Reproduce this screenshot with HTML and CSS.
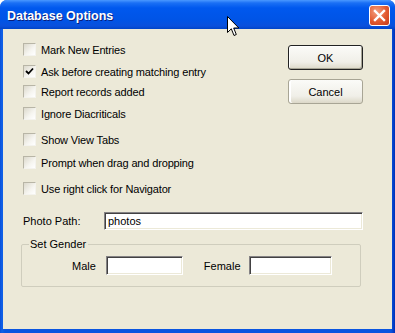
FILE: index.html
```html
<!DOCTYPE html>
<html>
    <head>
        <meta charset="utf-8">
        <link rel="stylesheet" href="styles.css">
    </head>
    <body>
    <div class="win">
        <div class="caption">
            <span class="title">Database Options</span>
            <button class="close" type="button">
                <svg width="13" height="13" viewBox="0 0 13 13"><path d="M2 2 L11 11 M11 2 L2 11" stroke="#fff" stroke-width="2.4" stroke-linecap="square"/></svg>
            </button>
        </div>
        <div class="client">
            <div class="top">
                <div class="opts">
                    <label class="chk"><span class="box"></span>Mark New Entries</label>
                    <label class="chk g9"><span class="box on"><svg width="9" height="9" viewBox="0 0 9 9"><path d="M1 4 L3.5 6.5 L8 1.5" fill="none" stroke="#000" stroke-width="1.8"/></svg></span>Ask before creating matching entry</label>
                    <label class="chk g7"><span class="box"></span>Report records added</label>
                    <label class="chk g9"><span class="box"></span>Ignore Diacriticals</label>
                    <label class="chk g13"><span class="box"></span>Show View Tabs</label>
                    <label class="chk g10"><span class="box"></span>Prompt when drag and dropping</label>
                    <label class="chk g13"><span class="box"></span>Use right click for Navigator</label>
                </div>
                <div class="btns">
                    <button class="btn def" type="button">OK</button>
                    <button class="btn" type="button">Cancel</button>
                </div>
            </div>
            <div class="path">
                <label for="photo">Photo Path:</label>
                <input class="txt wide" id="photo" value="photos">
            </div>
            <fieldset class="grp">
                <legend>Set Gender</legend>
                <div class="gender">
                    <label class="lbl-m" for="male">Male</label>
                    <input class="txt short" id="male">
                    <label class="lbl-f" for="female">Female</label>
                    <input class="txt short2" id="female">
                </div>
            </fieldset>
        </div>
        <!-- mouse pointer sitting over the caption -->
        <svg class="cursor" width="13" height="21" viewBox="0 0 13 21"><path d="M0.5 0.5 L0.5 16.5 L4.3 12.8 L7 19.5 L9.3 18.5 L6.7 12 L11.8 12 Z" fill="#fff" stroke="#000" stroke-width="1"/></svg>
    </div>
    </body>
</html>
```

FILE: styles.css
```css
body{
    margin: 0;
    font-family: 'Liberation Sans', Arial, sans-serif;
    font-size: 11px;
    color: #000;
}
body *{
    box-sizing: border-box;
}
.win{
    position: relative;
    width: 395px;
    height: 333px;
    background: linear-gradient(to right, #0a4fd8, #1061e8 2px, #0a55e0 5px, #0a55e0 calc(100% - 4px), #0030b8);
    border-radius: 7px 7px 0 0;
    display: flex;
    flex-direction: column;
    overflow: hidden;
}
.caption{
    height: 29px;
    flex: none;
    display: flex;
    align-items: center;
    justify-content: space-between;
    padding: 0 5px 0 7px;
    background: linear-gradient(to bottom, #4a98ff 0, #1a6ff5 3px, #0058ee 8px, #0054e6 20px, #0a50dc 26px, #0044c8 29px);
}
.title{
    color: #fff;
    font-weight: bold;
    font-size: 12.5px;
    text-shadow: 1px 1px 0 #0a1e7a;
    margin-top: 2px;
}
.close{
    width: 21px;
    height: 21px;
    margin-top: 1px;
    padding: 0;
    border: 1px solid #fff;
    border-radius: 3px;
    background: radial-gradient(circle at 35% 30%, #f4a080, #e25a30 55%, #c63a18);
    display: flex;
    align-items: center;
    justify-content: center;
}
.client{
    flex: 1;
    margin: 0 3px 4px 3px;
    background: #ece9d8;
}
.top{
    display: flex;
    justify-content: space-between;
}
.opts{
    padding: 14px 0 0 20px;
    display: flex;
    flex-direction: column;
}
.chk{
    display: flex;
    align-items: center;
    height: 13px;
    gap: 5px;
    white-space: nowrap;
    letter-spacing: -0.15px;
}
.g7{ margin-top: 7px; }
.g9{ margin-top: 9px; }
.g10{ margin-top: 10px; }
.g13{ margin-top: 13px; }
.box{
    width: 13px;
    height: 13px;
    flex: none;
    border: 1px solid #b8b5a6;
    border-right-color: #f4f3ee;
    border-bottom-color: #f4f3ee;
    background: linear-gradient(135deg, #dcd9cc, #f6f5f0 60%, #fff);
    display: flex;
    align-items: center;
    justify-content: center;
}
.btns{
    display: flex;
    flex-direction: column;
    gap: 9px;
    margin: 16px 29px 0 0;
}
.btn{
    width: 75px;
    height: 25px;
    font: inherit;
    color: #000;
    border: 1px solid #a8a595;
    border-radius: 3px;
    background: linear-gradient(to bottom, #fbfbf8, #f0efe8 70%, #dcd8c8);
    box-shadow: inset 2px 0 0 #fff;
}
.btn.def{
    border-color: #222;
    box-shadow: inset 1px 1px 0 #fff, inset -1px -1px 0 #a7a595;
}
.path{
    display: flex;
    align-items: center;
    margin: 17px 0 0 20px;
}
.path label{
    width: 81px;
}
.txt{
    height: 18px;
    padding: 0 3px;
    font: inherit;
    background: #fff;
    border: 1px solid #848284;
    border-right-color: #fff;
    border-bottom-color: #fff;
    box-shadow: inset 1px 1px 0 #424142, inset -1px -1px 0 #ece9d8;
    outline: none;
}
.wide{
    width: 259px;
}
.grp{
    width: 340px;
    margin: 8px 0 0 18px;
    padding: 5px 0 11px 0;
    border: 1px solid #cfcdbd;
    border-radius: 2px;
    min-width: 0;
}
.grp legend{
    margin-left: 7px;
    padding: 0 2px 0 1px;
    line-height: 13px;
}
.gender{
    display: flex;
    align-items: center;
}
.gender .txt{
    height: 19px;
}
.lbl-m{
    margin-left: 50px;
}
.short{
    width: 77px;
    margin-left: 10px;
}
.lbl-f{
    margin-left: 21px;
}
.short2{
    width: 83px;
    margin-left: 8px;
}
.cursor{
    position: absolute;
    left: 227px;
    top: 16px;
}
```
